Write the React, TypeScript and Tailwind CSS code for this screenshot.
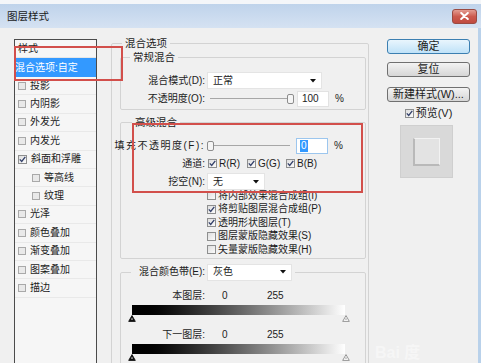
import React from "react";

const FONT = "font-['Liberation_Sans','Noto_Sans_CJK_SC',sans-serif]";

function Check({ on, grey }: { on?: boolean; grey?: boolean }) {
  return (
    <span
      className={
        grey
          ? "w-[8px] h-[8px] border border-[#a9a9a9] bg-[#e9e9e9] flex items-center justify-center shrink-0"
          : "w-[9px] h-[9px] border border-[#8e8f8f] bg-linear-to-br from-[#dedede] to-[#fbfbfb] flex items-center justify-center shrink-0"
      }
    >
      {on && (
        <svg width="7" height="7" viewBox="0 0 7 7">
          <path d="M0.8 3.4 L2.7 5.5 L6.3 0.8" fill="none" stroke="#33406a" strokeWidth="1.3" />
        </svg>
      )}
    </span>
  );
}

function Arrow() {
  return (
    <svg width="6" height="4" viewBox="0 0 6 4">
      <path d="M0 0 H6 L3 3.5 Z" fill="#111" />
    </svg>
  );
}

function Select({ value, w }: { value: string; w: string }) {
  return (
    <div className={`${w} h-[17px] bg-white border border-[#e4e4e4] flex items-center justify-between pl-[5px] pr-[5px]`}>
      <span>{value}</span>
      <Arrow />
    </div>
  );
}

function Marker({ dark }: { dark?: boolean }) {
  return (
    <svg width="8" height="7" viewBox="0 0 8 7">
      <path
        d="M4 0.6 L7.3 6.4 H0.7 Z"
        fill={dark ? "#111" : "#fff"}
        stroke={dark ? "#111" : "#8a8a8a"}
        strokeWidth="0.9"
      />
      <rect x="3.5" y="3.3" width="1" height="1.6" fill={dark ? "#fff" : "#8a8a8a"} />
    </svg>
  );
}

const styleItems = [
  { label: "投影" },
  { label: "内阴影" },
  { label: "外发光" },
  { label: "内发光" },
  { label: "斜面和浮雕", on: true },
  { label: "等高线", sub: true },
  { label: "纹理", sub: true },
  { label: "光泽" },
  { label: "颜色叠加" },
  { label: "渐变叠加" },
  { label: "图案叠加" },
  { label: "描边" },
];

const advanced = [
  { label: "将内部效果混合成组(I)" },
  { label: "将剪贴图层混合成组(P)", on: true },
  { label: "透明形状图层(T)", on: true },
  { label: "图层蒙版隐藏效果(S)" },
  { label: "矢量蒙版隐藏效果(H)" },
];

export default function App() {
  return (
    <div className={`${FONT} relative w-[481px] h-[363px] overflow-hidden bg-white text-[10px] text-[#1c1c1c] leading-none`}>
      <div className="h-[4px] bg-[#f4f6f9]" />
      {/* title bar */}
      <div className="h-[24px] bg-linear-to-b from-[#bfd3eb] to-[#d5e2f2] flex items-center justify-between pl-[7px] pr-[4px]">
        <span className="text-[10.5px] text-[#1a1a1a]">图层样式</span>
        <div className="w-[25px] h-[15px] rounded-[3px] border border-[#9a4a42] bg-linear-to-b from-[#e39c92] via-[#cc5a4e] to-[#c04a3e] flex items-center justify-center">
          <svg width="9" height="8" viewBox="0 0 9 8">
            <path d="M1.2 1 L7.8 7 M7.8 1 L1.2 7" stroke="#fff" strokeWidth="2" strokeLinecap="round" />
          </svg>
        </div>
      </div>

      <div className="flex items-start h-[335px] bg-[#f0f0f0] border-r-[3px] border-[#b9d1ea] pl-[14px]">
        {/* style list */}
        <div className="mt-[11px] w-[83px] h-[330px] border border-[#4b4b4b] bg-[#f6f6f6] flex flex-col">
          <div className="h-[18px] flex items-center pl-[3px] border-b border-[#e6e6e6]">样式</div>
          <div className="h-[19px] flex items-center bg-[#3399ff] text-white">混合选项:自定</div>
          {styleItems.map((it) => (
            <div
              key={it.label}
              className={`h-[18.4px] flex items-center gap-[4px] border-b border-[#e9e9e9] ${it.sub ? "pl-[17px]" : "pl-[3px]"}`}
            >
              <Check on={it.on} grey={!it.on} />
              <span>{it.label}</span>
            </div>
          ))}
        </div>

        {/* blending options */}
        <fieldset className="ml-[14px] mt-[8px] w-[258px] h-[340px] border border-[#d3d3d3] rounded-[2px] pl-[8px] pr-[2px]">
          <legend className="ml-[2px] px-[3px] leading-[14px] text-[10.5px]">混合选项</legend>

          <fieldset className="border border-[#d3d3d3] rounded-[2px] pb-[2px]">
            <legend className="ml-[9px] px-[3px] leading-[14px] text-[10.5px]">常规混合</legend>
            <div className="mt-[8px] h-[17px] flex items-center">
              <span className="w-[84px] text-right">混合模式(D):</span>
              <div className="ml-[2px]">
                <Select value="正常" w="w-[115px]" />
              </div>
            </div>
            <div className="mt-[1px] h-[17px] flex items-center">
              <span className="w-[84px] text-right">不透明度(O):</span>
              <div className="ml-[5px] w-[84px] flex items-center">
                <div className="flex-1 h-px bg-[#a7a7a7]" />
                <div className="w-[7px] h-[10px] rounded-[2px] border border-[#8d8d8d] bg-[#f5f5f5]" />
              </div>
              <div className="ml-[3px] w-[32px] h-[16px] bg-white border border-[#e2e2e2] flex items-center pl-[4px]">100</div>
              <span className="ml-[6px]">%</span>
            </div>
          </fieldset>

          <fieldset className="mt-[5px] border border-[#d3d3d3] rounded-[2px] pb-[1px]">
            <legend className="ml-[11px] px-[3px] leading-[14px] text-[10.5px]">高级混合</legend>
            <div className="mt-[8px] h-[17px] flex items-center">
              <span className="w-[93px] -ml-[9px] text-right whitespace-nowrap tracking-[1.5px]">填充不透明度(F):</span>
              <div className="ml-[2px] w-[86px] flex items-center">
                <div className="w-[7px] h-[10px] rounded-[2px] border border-[#8d8d8d] bg-[#f5f5f5]" />
                <div className="flex-1 h-px bg-[#a7a7a7] mr-[3px]" />
              </div>
              <div className="ml-[3px] w-[32px] h-[16px] bg-white border border-[#9cc6ee] flex items-center pl-[3px]">
                <span className="bg-[#3399ff] text-white px-[1px] leading-[12px]">0</span>
              </div>
              <span className="ml-[6px]">%</span>
            </div>
            <div className="mt-[1px] h-[17px] flex items-center">
              <span className="w-[84px] text-right">通道:</span>
              <div className="ml-[3px] flex items-center">
                {["R(R)", "G(G)", "B(B)"].map((c) => (
                  <div key={c} className="w-[39px] flex items-center gap-[2px]">
                    <Check on />
                    <span>{c}</span>
                  </div>
                ))}
              </div>
            </div>
            <div className="mt-[1px] h-[17px] flex items-center">
              <span className="w-[84px] text-right">挖空(N):</span>
              <div className="ml-[2px]">
                <Select value="无" w="w-[58px]" />
              </div>
            </div>
            <div className="-mt-[1px] ml-[86px] flex flex-col">
              {advanced.map((a) => (
                <div key={a.label} className="h-[13.5px] flex items-center gap-[2px]">
                  <Check on={a.on} />
                  <span>{a.label}</span>
                </div>
              ))}
            </div>
          </fieldset>

          <fieldset className="mt-[5px] h-[120px] border border-[#d3d3d3] rounded-[2px]">
            <legend className="ml-[10px] pl-[4px] pr-[3px]">
              <div className="flex items-center h-[17px]">
                <span className="w-[70px] text-right whitespace-nowrap">混合颜色带(E):</span>
                <div className="ml-[2px]">
                  <Select value="灰色" w="w-[85px]" />
                </div>
              </div>
            </legend>
            <div className="mt-[8px] h-[14px] flex items-center">
              <span className="w-[84px] text-right">本图层:</span>
              <span className="w-[62px] pl-[17px]">0</span>
              <span>255</span>
            </div>
            <div className="mt-[2px] ml-[11px] w-[213px] h-[10px] bg-linear-to-r from-black to-white" />
            <div className="ml-[7px] w-[222px] h-[7px] flex justify-between">
              <Marker dark />
              <Marker />
            </div>
            <div className="mt-[6px] h-[14px] flex items-center">
              <span className="w-[84px] text-right">下一图层:</span>
              <span className="w-[62px] pl-[17px]">0</span>
              <span>255</span>
            </div>
            <div className="mt-[2px] ml-[11px] w-[213px] h-[10px] bg-linear-to-r from-black to-white" />
            <div className="ml-[7px] w-[222px] h-[7px] flex justify-between">
              <Marker dark />
              <Marker />
            </div>
          </fieldset>
        </fieldset>

        {/* buttons */}
        <div className="ml-[18px] mt-[11px] w-[83px] h-[324px] flex flex-col text-[11px]">
          <div className="h-[15px] rounded-[3px] border border-[#3c7fb1] bg-linear-to-b from-[#e9f5fd] to-[#bfe2f8] flex items-center justify-center">确定</div>
          <div className="mt-[8px] h-[15px] rounded-[3px] border border-[#707070] bg-linear-to-b from-[#f3f3f3] to-[#d6d6d6] flex items-center justify-center">复位</div>
          <div className="mt-[10px] h-[15px] rounded-[3px] border border-[#707070] bg-linear-to-b from-[#f3f3f3] to-[#d6d6d6] flex items-center justify-center whitespace-nowrap">新建样式(W)...</div>
          <div className="mt-[6px] h-[11px] flex items-center justify-center gap-[2px]">
            <Check on />
            <span>预览(V)</span>
          </div>
          <div className="mt-[6px] ml-[13px] w-[53px] h-[53px] bg-[#d9d9d9] border border-[#cfcfcf] flex items-center justify-center">
            <div className="w-[27px] h-[28px] bg-[#e3e3e3] border-t border-r border-[#f2f2f2] border-l-2 border-b-2 border-l-[#b9b9b9] border-b-[#b9b9b9]" />
          </div>
          <div className="mt-auto mb-[2px] -ml-[12px] text-[16px] font-bold leading-[16px] text-[#f6f6f6]">Bai 度</div>
        </div>
      </div>

      {/* annotation boxes */}
      <div className="absolute left-[14px] top-[46px] w-[109px] h-[35px] border-2 border-[#d24f4b]" />
      <div className="absolute left-[132px] top-[123px] w-[231px] h-[70px] border-2 border-[#d24f4b]" />
    </div>
  );
}
